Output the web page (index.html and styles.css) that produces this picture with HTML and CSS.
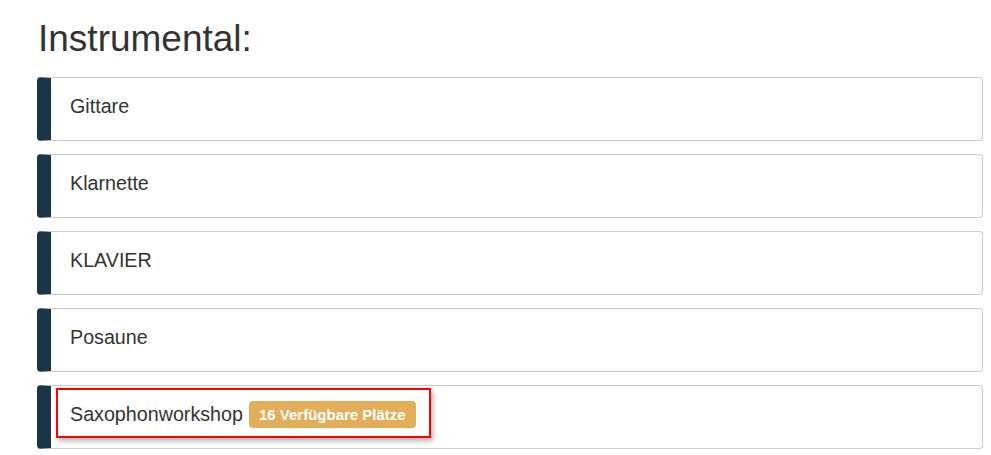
FILE: index.html
```html
<!DOCTYPE html>
<html lang="de">
<head>
  <meta charset="UTF-8" />
  <title>Instrumental</title>
  <link rel="stylesheet" href="styles.css">
</head>
<body>

  <h1>Instrumental:</h1>

  <div class="course">
    <div class="course-label">Gittare</div>
  </div>
  <div class="course">
    <div class="course-label">Klarnette</div>
  </div>
  <div class="course">
    <div class="course-label">KLAVIER</div>
  </div>
  <div class="course">
    <div class="course-label">Posaune</div>
  </div>
  <div class="course">
    <div class="course-label highlight">Saxophonworkshop <span class="badge">16 Verfügbare Plätze</span></div>
  </div>

</body>
</html>
```

FILE: styles.css
```css
body {
  font-family: "Liberation Sans", Arial, sans-serif;
  margin: 0;
  padding: 0 8px 0 37px;
  background-color: #fff;
  color: #333;
}
h1 {
  font-size: 37px;
  font-weight: normal;
  margin: 17px 0 16px 1px;
  line-height: 44px;
}
.course {
  border: 1px solid #ccc;
  border-left: 14px solid #1a3547;
  border-radius: 4px;
  padding: 2px 5px 10px 5px;
  margin-bottom: 13px;
}
.course-label {
  display: flex;
  align-items: center;
  height: 46px;
  padding: 3px 12px 0;
  box-sizing: border-box;
  height: 50px;
  border: 2px solid transparent;
  font-size: 19.7px;
}
.highlight {
  display: inline-flex;
  border-color: #f00;
  box-shadow: 2px 3px 5px rgba(0, 0, 0, 0.3);
  padding-right: 13px;
}
.badge {
  display: inline-block;
  margin-left: 6px;
  padding: 5px 10px 5px;
  font-size: 15px;
  font-weight: bold;
  color: #fff;
  background-color: #e2ae59;
  border-radius: 4px;
}
```
